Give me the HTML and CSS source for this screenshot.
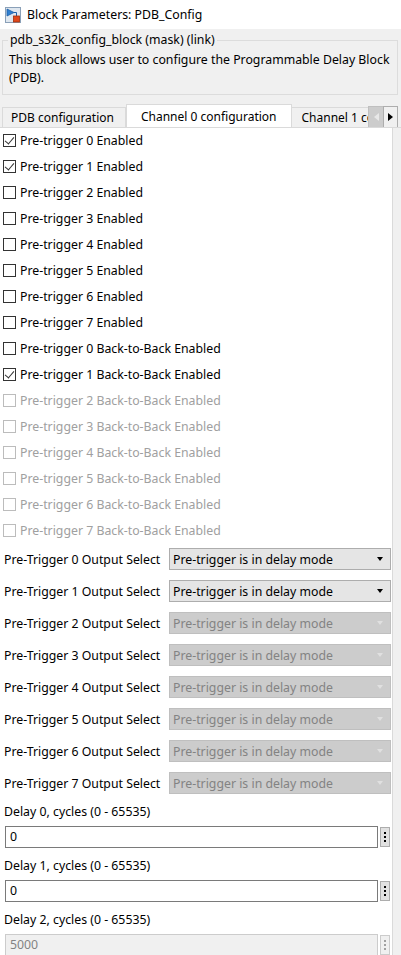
FILE: index.html
```html
<!DOCTYPE html>
<html>
<head>
<meta charset="utf-8">
<link rel="stylesheet" href="styles.css">
</head>
<body>
<div class="titlebar">
  <svg class="appicon" width="16" height="16" viewBox="0 0 16 16">
    <rect x="0.5" y="0.5" width="15" height="15" fill="#dfe7ef" stroke="#8aa0b8"/>
    <path d="M2 2 L9 5.5 L2 9 Z" fill="#2f7fd0" stroke="#1d5fa8" stroke-width="0.8"/>
    <path d="M9 5.5 H11.5 V9" fill="none" stroke="#1d5fa8" stroke-width="1"/>
    <rect x="8.5" y="9" width="6" height="6" fill="#e0481c" stroke="#a12d0a" stroke-width="0.8"/>
  </svg>
  <span class="title">Block Parameters: PDB_Config</span>
</div>

<fieldset class="group">
  <legend>pdb_s32k_config_block (mask) (link)</legend>
  <p class="desc">This block allows user to configure the Programmable Delay Block (PDB).</p>
</fieldset>

<div class="tabbar">
  <div class="tabs">
    <div class="tab">PDB configuration</div>
    <div class="tab active">Channel 0 configuration</div>
    <div class="tab last">Channel 1 co</div>
  </div>
  <div class="scrollbtns">
    <div class="sbtn disabled"><svg width="5" height="8" viewBox="0 0 5 8"><path d="M5 0 L0 4 L5 8 Z" fill="#e8e8e8"/></svg></div>
    <div class="sbtn"><svg width="5" height="8" viewBox="0 0 5 8"><path d="M0 0 L5 4 L0 8 Z" fill="#000"/></svg></div>
  </div>
</div>

<div class="panel">
  <div class="checks">
    <label class="check"><span class="box checked"></span>Pre-trigger 0 Enabled</label>
    <label class="check"><span class="box checked"></span>Pre-trigger 1 Enabled</label>
    <label class="check"><span class="box"></span>Pre-trigger 2 Enabled</label>
    <label class="check"><span class="box"></span>Pre-trigger 3 Enabled</label>
    <label class="check"><span class="box"></span>Pre-trigger 4 Enabled</label>
    <label class="check"><span class="box"></span>Pre-trigger 5 Enabled</label>
    <label class="check"><span class="box"></span>Pre-trigger 6 Enabled</label>
    <label class="check"><span class="box"></span>Pre-trigger 7 Enabled</label>
    <label class="check"><span class="box"></span>Pre-trigger 0 Back-to-Back Enabled</label>
    <label class="check"><span class="box checked"></span>Pre-trigger 1 Back-to-Back Enabled</label>
    <label class="check disabled"><span class="box"></span>Pre-trigger 2 Back-to-Back Enabled</label>
    <label class="check disabled"><span class="box"></span>Pre-trigger 3 Back-to-Back Enabled</label>
    <label class="check disabled"><span class="box"></span>Pre-trigger 4 Back-to-Back Enabled</label>
    <label class="check disabled"><span class="box"></span>Pre-trigger 5 Back-to-Back Enabled</label>
    <label class="check disabled"><span class="box"></span>Pre-trigger 6 Back-to-Back Enabled</label>
    <label class="check disabled"><span class="box"></span>Pre-trigger 7 Back-to-Back Enabled</label>
  </div>

  <div class="selects">
    <div class="selrow"><span class="sellabel">Pre-Trigger 0 Output Select</span><div class="combo"><span>Pre-trigger is in delay mode</span><i class="arrow"></i></div></div>
    <div class="selrow"><span class="sellabel">Pre-Trigger 1 Output Select</span><div class="combo"><span>Pre-trigger is in delay mode</span><i class="arrow"></i></div></div>
    <div class="selrow"><span class="sellabel">Pre-Trigger 2 Output Select</span><div class="combo disabled"><span>Pre-trigger is in delay mode</span><i class="arrow"></i></div></div>
    <div class="selrow"><span class="sellabel">Pre-Trigger 3 Output Select</span><div class="combo disabled"><span>Pre-trigger is in delay mode</span><i class="arrow"></i></div></div>
    <div class="selrow"><span class="sellabel">Pre-Trigger 4 Output Select</span><div class="combo disabled"><span>Pre-trigger is in delay mode</span><i class="arrow"></i></div></div>
    <div class="selrow"><span class="sellabel">Pre-Trigger 5 Output Select</span><div class="combo disabled"><span>Pre-trigger is in delay mode</span><i class="arrow"></i></div></div>
    <div class="selrow"><span class="sellabel">Pre-Trigger 6 Output Select</span><div class="combo disabled"><span>Pre-trigger is in delay mode</span><i class="arrow"></i></div></div>
    <div class="selrow"><span class="sellabel">Pre-Trigger 7 Output Select</span><div class="combo disabled"><span>Pre-trigger is in delay mode</span><i class="arrow"></i></div></div>
  </div>

  <div class="fields">
    <div class="field">
      <div class="flabel">Delay 0, cycles (0 - 65535)</div>
      <div class="frow"><div class="input">0</div><div class="dots"><i></i><i></i><i></i></div></div>
    </div>
    <div class="field">
      <div class="flabel">Delay 1, cycles (0 - 65535)</div>
      <div class="frow"><div class="input">0</div><div class="dots"><i></i><i></i><i></i></div></div>
    </div>
    <div class="field">
      <div class="flabel">Delay 2, cycles (0 - 65535)</div>
      <div class="frow"><div class="input disabled">5000</div><div class="dots disabled"><i></i><i></i><i></i></div></div>
    </div>
  </div>
</div>
</body>
</html>
```

FILE: styles.css
```css
* { box-sizing: border-box; }
html, body {
  margin: 0;
  padding: 0;
  background: #f0f0f0;
  font-family: "Noto Sans", "Open Sans", sans-serif;
  font-size: 12.3px;
  color: #000;
  overflow: hidden;
  height: 955px;
}
.titlebar {
  height: 29px;
  background: #fff;
  display: flex;
  align-items: center;
  padding-left: 5px;
  gap: 6px;
}
.appicon { flex: none; }
.title { font-size: 12.3px; color: #000; }

.group {
  margin: 3px 3px 0 2px;
  padding: 3px 6px 7px 6px;
  border: 1px solid #dcdcdc;
  min-width: 0;
}
.group legend {
  padding: 0 2px;
  margin-left: -1px;
  color: #000;
  line-height: 16px;
}
.desc {
  margin: 0;
  line-height: 18px;
}

.tabbar {
  position: relative;
  margin-top: 7px;
  height: 26px;
  padding-left: 2px;
  border-bottom: 1px solid #dadada;
  overflow: hidden;
  font-size: 12px;
}
.tabs {
  display: flex;
  align-items: flex-end;
  height: 26px;
}
.tab {
  flex: none;
  height: 21px;
  line-height: 20px;
  padding: 0 11px 0 8px;
  border: 1px solid #dadada;
  border-bottom: none;
  background: #f0f0f0;
  white-space: nowrap;
}
.tab + .tab { border-left: none; }
.tab.active {
  height: 25px;
  line-height: 23px;
  background: #fff;
  padding: 0 14px 0 14px;
  border-left: 1px solid #dadada;
  margin-bottom: -1px;
  position: relative;
  z-index: 1;
}
.tab.last {
  width: 90px;
  padding-left: 10px;
  overflow: hidden;
}
.scrollbtns {
  position: absolute;
  top: 4px;
  left: 368px;
  display: flex;
}
.sbtn {
  width: 15px;
  height: 22px;
  display: flex;
  align-items: center;
  justify-content: center;
  background: #f0f0f0;
  border: 1px solid #adadad;
}
.sbtn.disabled {
  background: #cccccc;
  border-color: #bfbfbf;
  border-right: none;
}

.panel {
  background: #fff;
  width: 393px;
  border-right: 1px solid #dadada;
  height: 830px;
}
.checks {
  display: flex;
  flex-direction: column;
  gap: 2px;
}
.check {
  height: 24px;
  display: flex;
  align-items: center;
  padding-left: 3px;
  white-space: nowrap;
}
.box {
  width: 13px;
  height: 13px;
  border: 1px solid #333;
  background: #fff;
  margin-right: 4px;
  flex: none;
  position: relative;
}
.box.checked::after {
  content: "";
  position: absolute;
  left: 3px;
  top: 0px;
  width: 4px;
  height: 8px;
  border-right: 1.5px solid #333;
  border-bottom: 1.5px solid #333;
  transform: rotate(40deg);
}
.check.disabled { color: #a0a0a0; }
.check.disabled .box { border-color: #bcbcbc; }

.selects { margin-top: 1px; }
.selrow {
  height: 32px;
  display: flex;
  align-items: center;
  padding-left: 4px;
}
.sellabel {
  width: 165px;
  white-space: nowrap;
}
.combo {
  width: 222px;
  height: 22px;
  border: 1px solid #adadad;
  background: #e5e5e5;
  display: flex;
  align-items: center;
  justify-content: space-between;
  padding: 0 7px 0 3px;
  white-space: nowrap;
}
.arrow {
  width: 0;
  height: 0;
  border-left: 3.5px solid transparent;
  border-right: 3.5px solid transparent;
  border-top: 4px solid #000;
}
.combo.disabled {
  background: #cccccc;
  border-color: #bfbfbf;
  color: #838383;
}
.combo.disabled .arrow { border-top-color: #e0e0e0; }

.field { margin-bottom: 5px; }
.flabel {
  height: 27px;
  line-height: 26px;
  padding-left: 4px;
}
.frow {
  display: flex;
  align-items: center;
  padding-left: 5px;
  gap: 2px;
}
.input {
  width: 373px;
  height: 22px;
  border: 1px solid #7a7a7a;
  background: #fff;
  line-height: 20px;
  padding-left: 4px;
}
.input.disabled {
  background: #f0f0f0;
  border-color: #cccccc;
  color: #838383;
}
.dots {
  width: 10px;
  height: 20px;
  border: 1px solid #adadad;
  background: #e1e1e1;
  display: flex;
  flex-direction: column;
  align-items: center;
  justify-content: center;
  gap: 2px;
}
.dots i {
  width: 2px;
  height: 2px;
  background: #000;
}
.dots.disabled { background: #f0f0f0; border-color: #cccccc; }
.dots.disabled i { background: #a0a0a0; }
```
